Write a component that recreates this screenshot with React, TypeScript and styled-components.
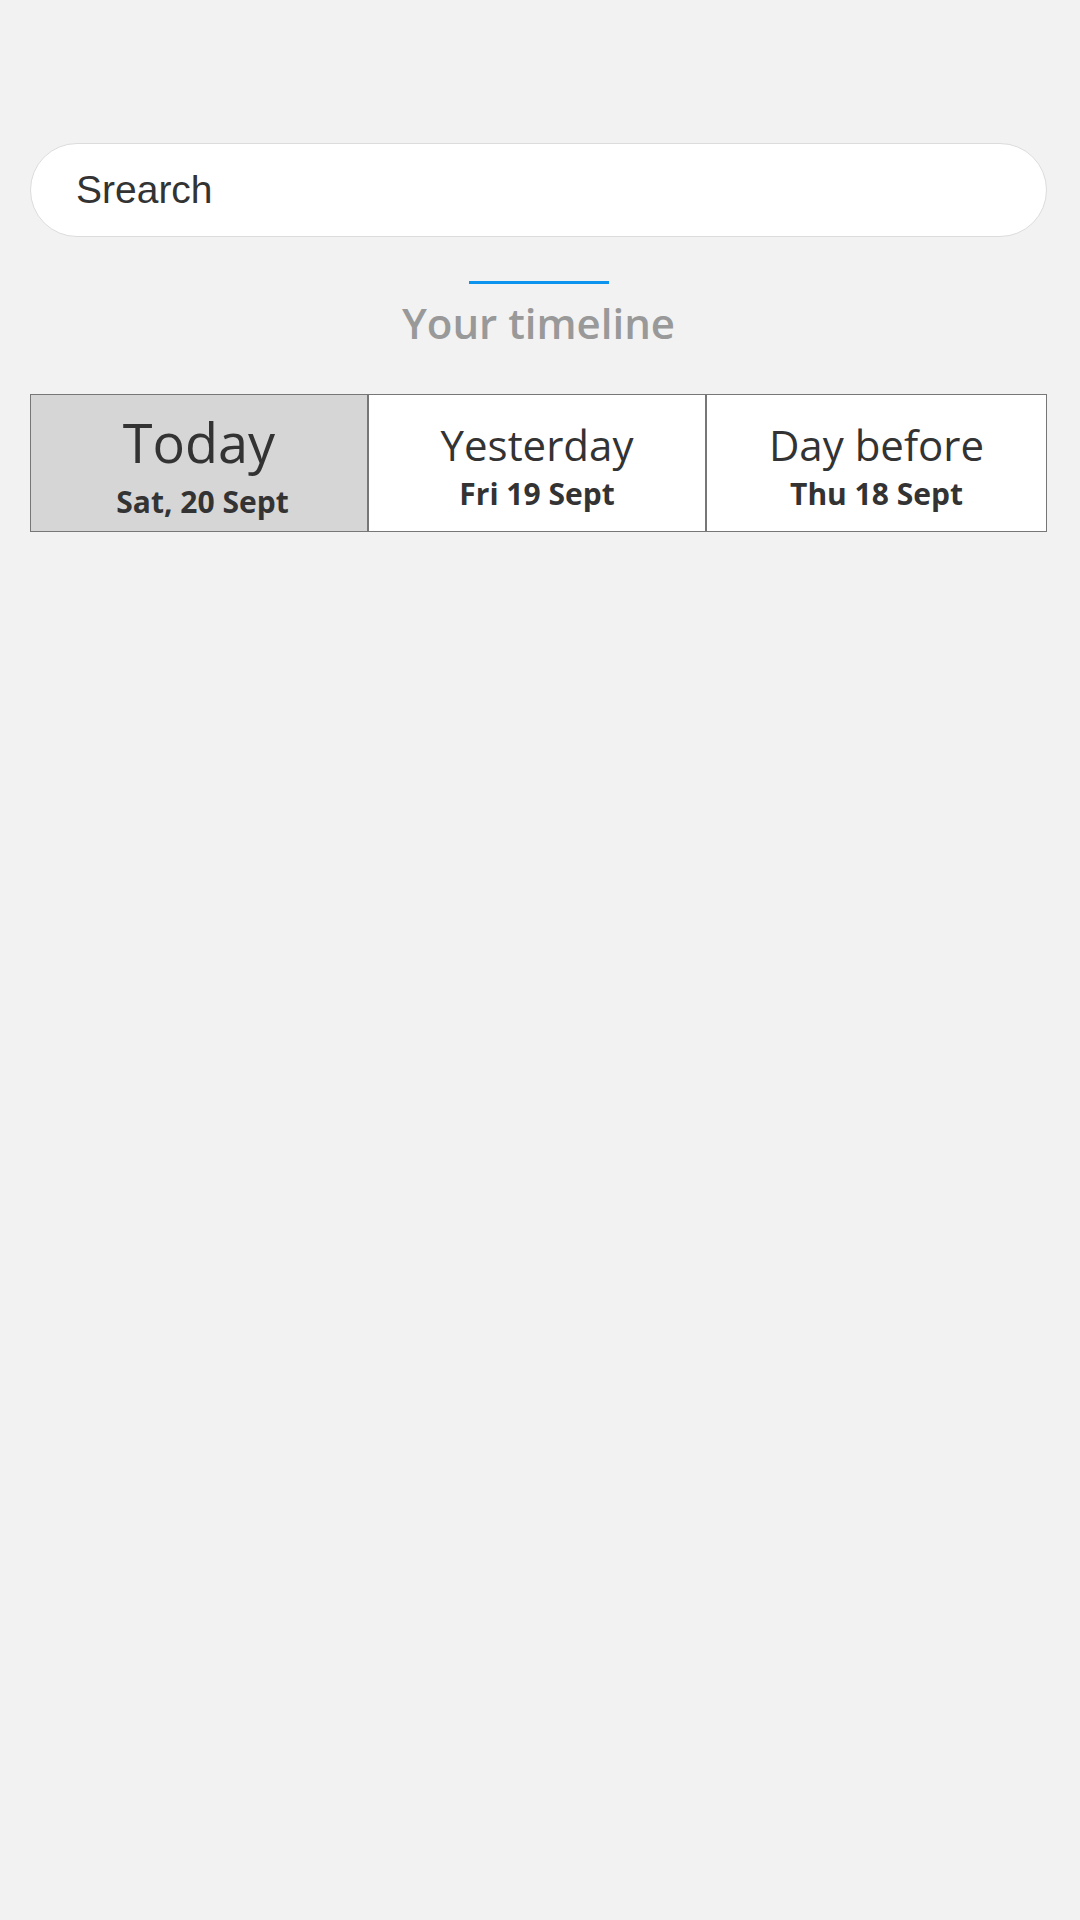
import React from "react";
import styled, { createGlobalStyle } from "styled-components";

const GlobalStyle = createGlobalStyle`
  html, body {
    margin: 0;
    padding: 0;
    background: #f2f2f2;
  }
  body {
    font-family: "Open Sans", "Liberation Sans", Arial, sans-serif;
    color: #333333;
  }
  * { box-sizing: border-box; }
`;

const Page = styled.main`
  min-height: 1920px;
  padding: 143px 33px 0 30px;
  background: #f2f2f2;
  display: flex;
  flex-direction: column;
`;

const SearchInput = styled.input`
  width: 100%;
  height: 94px;
  border: 1px solid #dcdcdc;
  border-radius: 47px;
  background: #ffffff;
  padding: 0 0 0 45px;
  font-family: "Liberation Sans", Arial, sans-serif;
  font-size: 39px;
  color: #333333;
  outline: none;
  &::placeholder {
    color: #333333;
    opacity: 1;
  }
`;

const Header = styled.section`
  display: flex;
  flex-direction: column;
  align-items: center;
  margin-top: 44px;
`;

const Accent = styled.div`
  width: 140px;
  height: 3px;
  background: #0c94ee;
`;

const Title = styled.h2`
  margin: 11px 0 0;
  font-family: "Open Sans", sans-serif;
  font-weight: 600;
  font-size: 42px;
  line-height: 56px;
  color: #999999;
`;

const Days = styled.nav`
  margin-top: 43px;
  display: grid;
  grid-template-columns: 338px 338px 1fr;
`;

const DayCell = styled.button<{ $active?: boolean }>`
  height: 138px;
  border: 1px solid #777777;
  background: ${(p) => (p.$active ? "#d6d6d6" : "#ffffff")};
  display: flex;
  flex-direction: column;
  align-items: center;
  justify-content: center;
  gap: ${(p) => (p.$active ? "18px" : "13px")};
  padding: 6px 0 0;
  cursor: pointer;
  font-family: "Open Sans", sans-serif;
  color: #333333;
`;

const DayName = styled.span<{ $active?: boolean }>`
  font-size: ${(p) => (p.$active ? "54px" : "42px")};
  line-height: 1;
  font-weight: 400;
`;

const DayDate = styled.span<{ $active?: boolean }>`
  font-size: 30px;
  line-height: 1;
  font-weight: 700;
  padding-left: ${(p) => (p.$active ? "7px" : "0")};
`;

const days = [
  { name: "Today", date: "Sat, 20 Sept", active: true },
  { name: "Yesterday", date: "Fri 19 Sept", active: false },
  { name: "Day before", date: "Thu 18 Sept", active: false },
];

export default function App() {
  return (
    <>
      <GlobalStyle />
      <Page>
        <SearchInput placeholder="Srearch" />
        <Header>
          <Accent />
          <Title>Your timeline</Title>
        </Header>
        <Days>
          {days.map((d) => (
            <DayCell key={d.name} $active={d.active}>
              <DayName $active={d.active}>{d.name}</DayName>
              <DayDate $active={d.active}>{d.date}</DayDate>
            </DayCell>
          ))}
        </Days>
      </Page>
    </>
  );
}
